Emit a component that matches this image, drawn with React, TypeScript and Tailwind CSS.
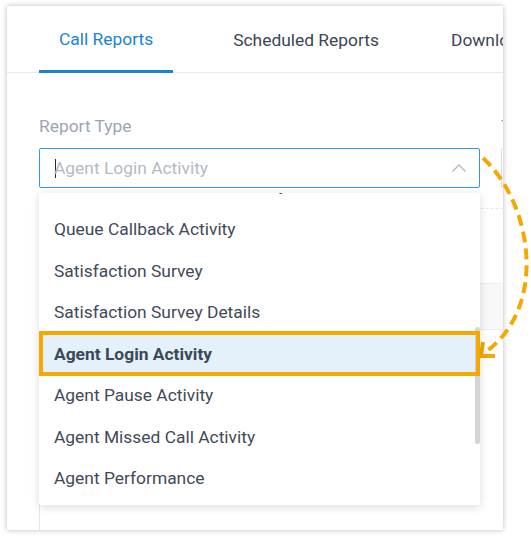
import React from "react"

const items = [
    "Queue Performance Summary",
    "Queue Callback Activity",
    "Satisfaction Survey",
    "Satisfaction Survey Details",
    "Agent Login Activity",
    "Agent Pause Activity",
    "Agent Missed Call Activity",
    "Agent Performance",
]

const Arrow = () => (
    <svg className="absolute left-0 top-0 pointer-events-none" width="531" height="536" viewBox="0 0 531 536" fill="none">
        <path d="M483 158 C532 203, 548 305, 487 351" stroke="#f5a800" strokeWidth="4" strokeDasharray="11 6" />
        <polyline points="483,342 481,356 495,356" stroke="#f5a800" strokeWidth="4" strokeLinejoin="miter" />
    </svg>
)

const App = () => {
    return (
        <div className="relative w-[531px] h-[536px] bg-white pl-[7px] pt-[6px]" style={{ fontFamily: "Roboto, 'Noto Sans', sans-serif" }}>
            <div className="w-[496px] h-[524px] bg-white overflow-hidden shadow-[0_0_5px_rgba(0,0,0,0.28)]">
                {/* tabs */}
                <div className="flex h-[67px] pl-[32px] border-b border-[#e6e9ed] text-[17.4px] whitespace-nowrap">
                    <div className="h-[67px] -mb-px flex items-center pt-[3px] px-[20px] border-b-[3px] border-[#1a84d3] text-[#1a84d3]">Call Reports</div>
                    <div className="h-[66px] flex items-center pt-[3px] px-[20px] ml-[40px] text-[#3b4553]">Scheduled Reports</div>
                    <div className="h-[66px] flex items-center pt-[3px] px-[20px] ml-[32px] text-[#3b4553]">Downloads</div>
                </div>

                <div className="pl-[32px] pt-[41px]">
                    <div className="flex gap-[21px] w-max">
                        <div className="w-[441px] relative z-10">
                            <div className="text-[17.4px] leading-[24px] text-[#9ba5b4]">Report Type</div>
                            <div className="relative mt-[10px]">
                                <div className="h-[40px] border border-[#3599dc] rounded-[2px] flex items-center pl-[15px] pr-[13px]">
                                    <span className="w-px h-[19px] bg-[#2b2b2b] mr-[-2px]" />
                                    <span className="flex-1 text-[17.4px] text-[#b4bac4]">Agent Login Activity</span>
                                    <svg width="14" height="8" viewBox="0 0 14 8" fill="none">
                                        <polyline points="0.5,7.5 7,1 13.5,7.5" stroke="#b3b9c2" strokeWidth="1.3" />
                                    </svg>
                                </div>
                                {/* dropdown menu */}
                                <div className="absolute left-0 top-full mt-[5px] w-[441px] h-[312px] bg-white overflow-hidden rounded-[2px] shadow-[0_2px_10px_rgba(0,0,0,0.14)]">
                                    <div className="mt-[-26px]">
                                        {items.map((it, i) =>
                                            it === "Agent Login Activity" ? (
                                                <div key={it} className="relative h-[41.5px] flex items-center pl-[15px] bg-[#e4f1fa] text-[17.4px] font-bold text-[#3d4757]">
                                                    {it}
                                                    <div className="absolute left-0 right-0 top-[-2px] bottom-[-1px] border-4 border-[#f7a800] z-20" />
                                                </div>
                                            ) : (
                                                <div key={it} className="h-[41.5px] flex items-center pl-[15px] text-[17.4px] text-[#3f4a5a]">
                                                    <span className={i === 0 ? "-translate-y-[3px]" : ""}>{it}</span>
                                                </div>
                                            )
                                        )}
                                    </div>
                                    <div className="absolute right-0 top-[134px] h-[117px] w-[5px] rounded-full bg-[#d5d5d5] z-10" />
                                </div>
                            </div>
                        </div>
                        <div className="w-[200px] shrink-0">
                            <div className="text-[17.4px] leading-[24px] text-[#9ba5b4]">Time</div>
                            <div className="mt-[10px] h-[40px] border border-[#d9dde3] rounded-[2px]" />
                        </div>
                    </div>

                    {/* content behind the menu */}
                    <div className="mt-[20px] w-[700px] h-[330px] border-l border-[#e3e6ea]">
                        <div className="h-[75px] border-t border-dashed border-[#e3e6ea]" />
                        <div className="h-[47px] bg-[#f8f8f9] border-y border-[#ebedf0]" />
                    </div>
                </div>
            </div>
            <Arrow />
        </div>
    )
}

export default App
